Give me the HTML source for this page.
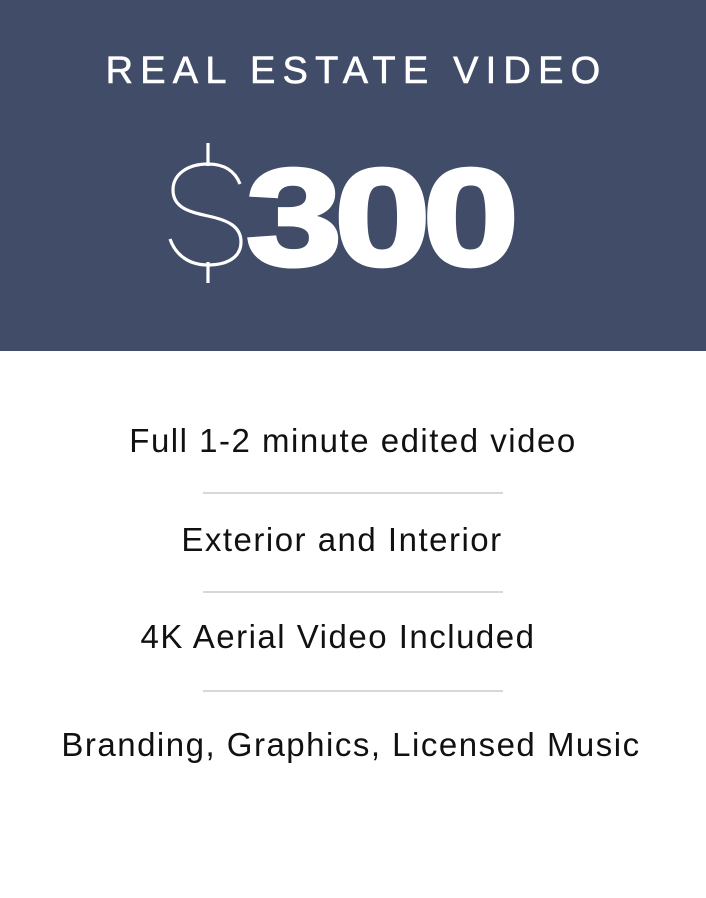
<!DOCTYPE html>
<html><head><style>
body{margin:0;width:706px;height:898px;background:#fff;font-family:"Liberation Sans",sans-serif;position:relative;overflow:hidden}
.top{position:absolute;left:0;top:0;width:706px;height:351px;background:#414c68}
.title{position:absolute;left:0;width:706px;top:49px;text-align:center;color:#fff;font-size:38px;letter-spacing:7.2px;line-height:44px;padding-left:7px;box-sizing:border-box;-webkit-text-stroke:0.6px #fff}
.num{position:absolute;left:246px;top:149px;color:#fff;font-weight:bold;font-size:138px;line-height:138px;letter-spacing:-6px;transform:scaleX(1.25);transform-origin:0 0;-webkit-text-stroke:4px #fff}
.item{position:absolute;left:0;width:706px;text-align:center;font-size:33px;letter-spacing:1.5px;color:#111;line-height:40px;box-sizing:border-box}
.hr{position:absolute;left:203px;width:300px;height:2px;background:#d8d8d8}
</style></head><body>
<div class="top"></div>
<div class="title">REAL ESTATE VIDEO</div>
<svg style="position:absolute;left:160px;top:138px" width="90" height="150" viewBox="0 0 90 150">
<g fill="none" stroke="#fff" stroke-width="3.2">
<path d="M48 5V28M48 124V145"/>
<path d="M80 46C75 33 64 26 48 26C28 26 13 36 13 52C13 70 30 74 48 78C67 82 81 88 81 104C81 120 66 127 48 127C30 127 16 118 10 101"/>
</g></svg>
<div class="num">300</div>
<div class="item" style="top:421px">Full 1-2 minute edited video</div>
<div class="hr" style="top:492px"></div>
<div class="item" style="top:520px;padding-right:22px">Exterior and Interior</div>
<div class="hr" style="top:591px"></div>
<div class="item" style="top:617px;padding-right:30px">4K Aerial Video Included</div>
<div class="hr" style="top:690px"></div>
<div class="item" style="top:725px;padding-right:4px">Branding, Graphics, Licensed Music</div>
</body></html>
